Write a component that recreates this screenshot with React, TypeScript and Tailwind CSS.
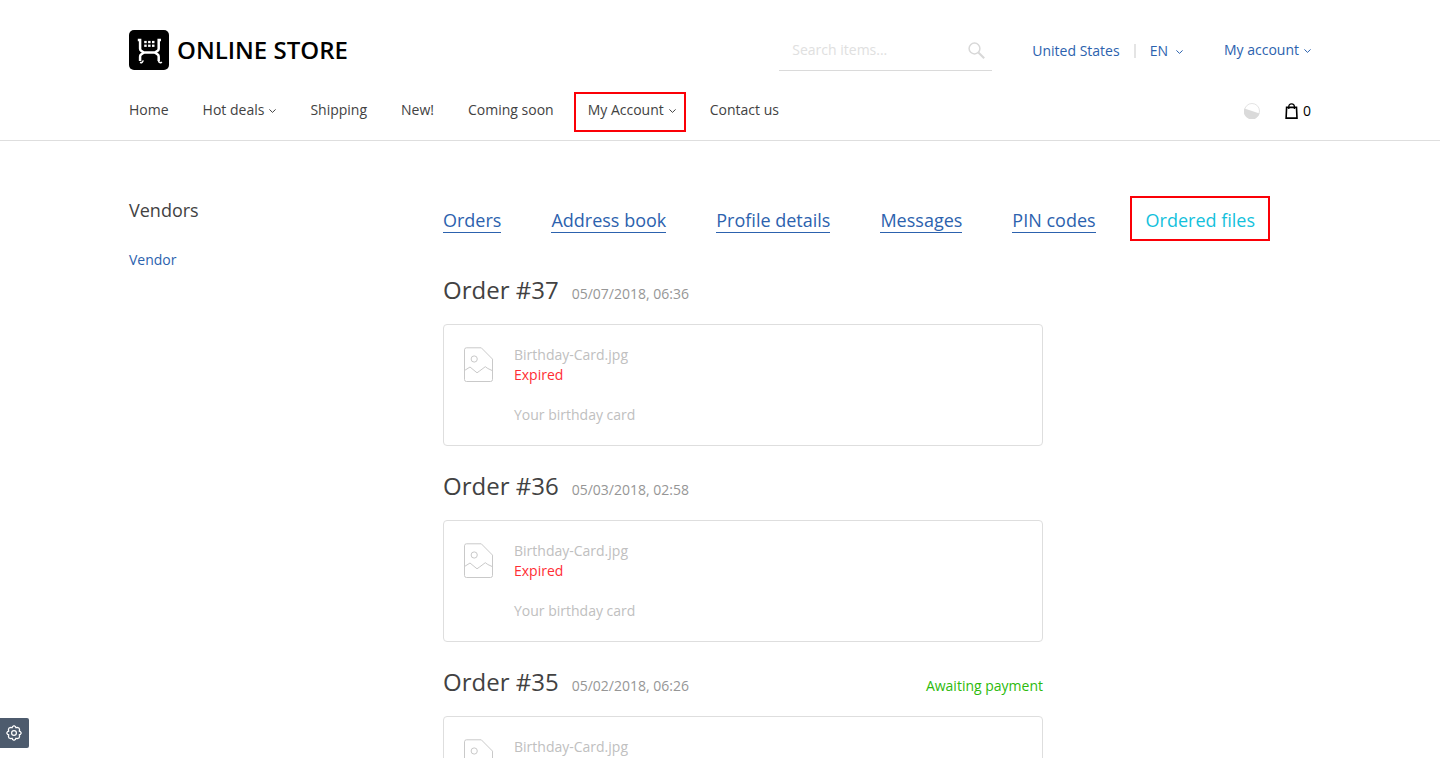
import React from "react";

const navItems = [
  { label: "Home" },
  { label: "Hot deals", menu: true },
  { label: "Shipping" },
  { label: "New!" },
  { label: "Coming soon" },
  { label: "My Account", menu: true, marked: true },
  { label: "Contact us" },
];

const tabs = ["Orders", "Address book", "Profile details", "Messages", "PIN codes"];

const orders = [
  { id: 37, date: "05/07/2018, 06:36", note: "" },
  { id: 36, date: "05/03/2018, 02:58", note: "" },
  { id: 35, date: "05/02/2018, 06:26", note: "Awaiting payment" },
];

function Chevron() {
  return (
    <svg className="mt-0.5 h-1 w-[7px] shrink-0" viewBox="0 0 7 4" fill="none" stroke="currentColor" aria-hidden="true">
      <path d="M.4 .4 3.5 3.4 6.6 .4" />
    </svg>
  );
}

function Logo() {
  return (
    <svg className="size-10" viewBox="0 0 40 40" aria-hidden="true">
      <rect width="40" height="40" rx="5" fill="#000" />
      <g fill="none" stroke="#fff" strokeWidth="2.5">
        <path d="M8.8 10.1h2.3v8.7q0 1.2 1 1.9l2.8 1.9h11l2.8-1.9q1-.7 1-1.9v-8.7H32" />
        <path d="m14.9 22.6-2.8 2q-1 .8-1 2.1v4.4M25.9 22.6l2.8 2q1 .8 1 2.1v4.4" />
      </g>
      <g fill="#fff">
        {[15.2, 19.1, 23].map((x) => (
          <g key={x}>
            <rect x={x} y="10.9" width="2.5" height="2.3" />
            <rect x={x} y="14.6" width="2.5" height="2.3" />
          </g>
        ))}
      </g>
      <path d="M14 30.4a2.1 2.1 0 0 1-3 2M29.5 31a2.1 2.1 0 0 0 3.4 1.2" fill="none" stroke="#fff" strokeWidth="1.5" />
    </svg>
  );
}

function FileIcon() {
  return (
    <svg className="mt-[2px] h-[36px] w-[30px] shrink-0" viewBox="0 0 30 36" fill="none" stroke="#c9c9c9" aria-hidden="true">
      <path d="M2.5 .8h14.8l11.2 11.3v20.4a2 2 0 0 1-2 2h-24a2 2 0 0 1-2-2V2.8a2 2 0 0 1 2-2Z" />
      <circle cx="10.2" cy="12" r="3.1" />
      <path d="M.5 23.5 6 20l7 5.8 2.7-1.9 5.6-4.2 2.5 1.8 4.7 2.2" />
    </svg>
  );
}

export default function App() {
  return (
    <div className="min-h-screen bg-white font-['Open_Sans','Noto_Sans',sans-serif] text-sm leading-5 text-[#424242]">
      <header className="border-b border-[#dedede] px-[129px] pt-[30px] pb-2.5">
        <div className="flex h-10 items-center">
          <a href="#" className="flex items-center gap-2 text-2xl font-semibold text-black">
            <Logo />
            <span>ONLINE STORE</span>
          </a>
          <form className="mt-0.5 ml-auto flex h-10 w-[213px] items-center border-b border-[#dadada] pr-[7px] pl-[13px]">
            <input
              type="text"
              aria-label="Search items"
              placeholder="Search items..."
              className="mb-0.5 h-5 min-w-0 flex-1 bg-transparent outline-none placeholder:text-[#e0e0e0]"
            />
            <button type="button" aria-label="Search">
              <svg className="size-[17px]" viewBox="0 0 17 17" fill="none" stroke="#d8d8d8" aria-hidden="true">
                <circle cx="6.5" cy="6.5" r="5.4" strokeWidth="1.5" />
                <path d="m10.4 10.4 5.8 5.8" strokeWidth="2.1" />
              </svg>
            </button>
          </form>
          <div className="ml-10 flex items-center text-[#2c62ae]">
            <div className="mt-0.5 flex items-center">
              <button type="button">United States</button>
              <span className="mx-3.5 h-3.5 w-0.5 bg-[#e4e4e4]" />
              <button type="button" className="flex items-center gap-2">
                EN <Chevron />
              </button>
            </div>
            <button type="button" className="ml-[41px] flex items-center gap-[5px]">
              My account <Chevron />
            </button>
          </div>
        </div>
        <div className="mt-5 flex h-10 items-center justify-between">
          <nav className="flex items-center gap-[34px]">
            {navItems.map((item) => (
              <a key={item.label} href="#" className="relative flex items-center gap-[5px]">
                {item.label}
                {item.menu && <Chevron />}
                {item.marked && <span className="absolute -top-2 -right-2.5 -bottom-3 -left-3.5 border-2 border-[#fb0007]" />}
              </a>
            ))}
          </nav>
          <div className="flex items-center gap-[25px] pt-0.5 text-black">
            <button type="button" aria-label="Compare">
              <svg className="size-4" viewBox="0 0 16 16" aria-hidden="true">
                <circle cx="8" cy="8" r="7.5" fill="#fff" stroke="#e4e4e4" />
                <path d="M.4 5.6A8 8 0 1 0 15.6 10.5Z" fill="#dadada" />
              </svg>
            </button>
            <button type="button" aria-label="Cart" className="flex items-center gap-1">
              <svg className="h-4 w-[14px]" viewBox="0 0 14 16" fill="none" stroke="#000" aria-hidden="true">
                <path d="M1.6 4.4h9.9l.5 10.7H1.1Z" strokeWidth="1.6" />
                <path d="M3.8 6V3.8Q3.8 .9 6.6 .9T9.4 3.8V6" strokeWidth="1.3" />
              </svg>
              <span>0</span>
            </button>
          </div>
        </div>
      </header>

      <div className="flex items-start px-[129px] pt-[57px]">
        <aside className="w-[314px] shrink-0">
          <h2 className="text-lg leading-6">Vendors</h2>
          <a href="#" className="mt-7 block text-[#2c62ae]">Vendor</a>
        </aside>
        <main className="min-w-0 flex-1 pt-3">
          <nav className="flex gap-[50px] text-lg leading-5 whitespace-nowrap">
            {tabs.map((tab) => (
              <a key={tab} href="#" className="border-b border-[#2c62ae] pb-0.5 text-[#2c62ae]">{tab}</a>
            ))}
            <a href="#" aria-current="page" className="relative text-[#13c1dc]">
              Ordered files
              <span className="absolute -top-3.5 -right-[15px] -bottom-2 -left-4 border-2 border-[#fb0007]" />
            </a>
          </nav>
          <div className="mt-[42px] flex max-w-[600px] flex-col gap-[25px]">
            {orders.map((order) => (
              <section key={order.id}>
                <div className="flex items-baseline">
                  <h2 className="text-2xl leading-[30px]">Order #{order.id}</h2>
                  <span className="ml-[13px] text-[#969696]">{order.date}</span>
                  {order.note && <span className="ml-auto text-[#2dba0c]">{order.note}</span>}
                </div>
                <div className="mt-[19px] flex gap-5 rounded border border-[#dedede] p-5 text-[#c0c0c0]">
                  <FileIcon />
                  <div>
                    <a href="#" className="block">Birthday-Card.jpg</a>
                    <p className="text-[#ff2d34]">Expired</p>
                    <p className="mt-5">Your birthday card</p>
                  </div>
                </div>
              </section>
            ))}
          </div>
        </main>
      </div>

      <button type="button" aria-label="Settings" className="fixed bottom-2.5 left-0 flex h-[30px] w-[29px] items-center justify-center rounded-r-xs bg-[#4d5b6d] pr-px">
        <svg className="size-4" viewBox="0 0 16 16" fill="none" stroke="#fff" strokeWidth="1.2" aria-hidden="true">
          <path d="M6.6 1.6 8 .7l1.4.9.5 1.2 1.3-.4 1.8.6.6 1.8-.4 1.3 1.2.5.9 1.4-.9 1.4-1.2.5.4 1.3-.6 1.8-1.8.6-1.3-.4-.5 1.2-1.4.9-1.4-.9-.5-1.2-1.3.4-1.8-.6-.6-1.8.4-1.3-1.2-.5L.7 8l.9-1.4 1.2-.5-.4-1.3.6-1.8 1.8-.6 1.3.4Z" strokeLinejoin="round" />
          <circle cx="8" cy="8" r="2.4" />
        </svg>
      </button>
    </div>
  );
}
